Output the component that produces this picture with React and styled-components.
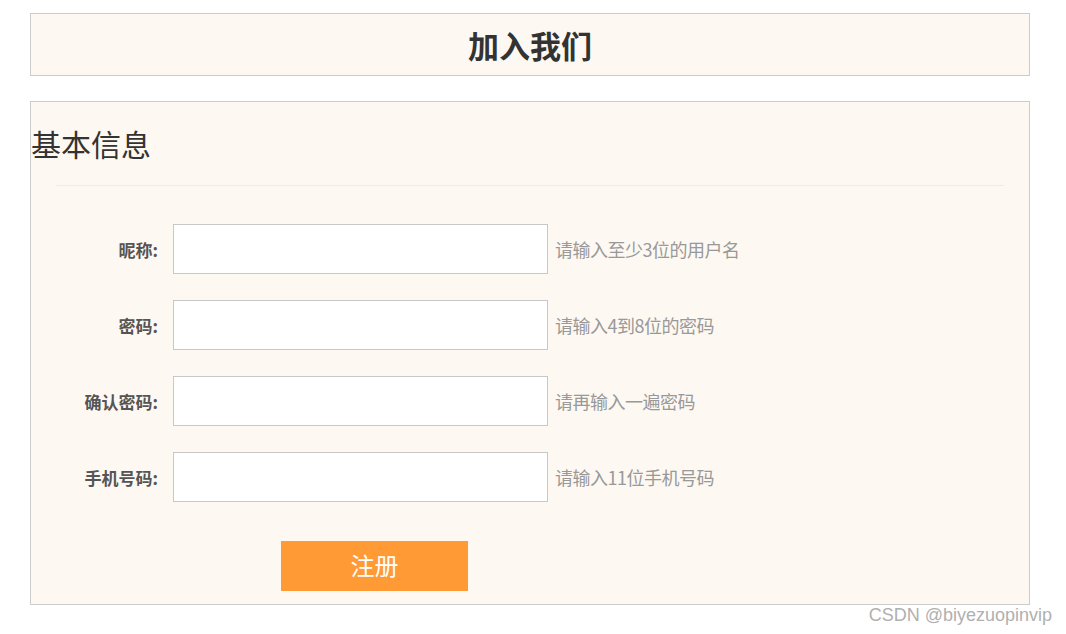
import React from 'react'
import styled, { createGlobalStyle } from "styled-components";

const GlobalStyle = createGlobalStyle`
    body {
        margin: 0;
        background: #fff;
        font-family: "Noto Sans CJK SC", "Noto Sans", sans-serif;
    }
`

const fields = [
    { label: '昵称:', hint: '请输入至少3位的用户名', type: 'text' },
    { label: '密码:', hint: '请输入4到8位的密码', type: 'password' },
    { label: '确认密码:', hint: '请再输入一遍密码', type: 'password' },
    { label: '手机号码:', hint: '请输入11位手机号码', type: 'text' },
]

const App = () => {
    return (
        <Page>
            <GlobalStyle />
            <TitleBox>
                <Title>加入我们</Title>
            </TitleBox>
            <FormBox>
                <Heading>基本信息</Heading>
                <Divider />
                <Fields>
                    {fields.map((f) => (
                        <Row key={f.label}>
                            <Label>{f.label}</Label>
                            <Input type={f.type} />
                            <Hint>{f.hint}</Hint>
                        </Row>
                    ))}
                </Fields>
                <Submit>注册</Submit>
            </FormBox>
            <Watermark>CSDN @biyezuopinvip</Watermark>
        </Page>
    )
}

export default App;

const Page = styled.div`
    position: relative;
    box-sizing: border-box;
    width: 1066px;
    height: 634px;
    padding: 13px 36px 0 30px;
`

const TitleBox = styled.div`
    height: 61px;
    border: 1px solid #cccccc;
    background: #fdf8f2;
    display: flex;
    justify-content: center;
    align-items: center;
`

const Title = styled.h1`
    margin: 0;
    font-size: 31px;
    line-height: 31px;
    font-weight: bold;
    color: #333;
`

const FormBox = styled.div`
    margin-top: 25px;
    border: 1px solid #cccccc;
    background: #fdf8f2;
    padding: 26px 0 13px 0;
`

const Heading = styled.h2`
    margin: 0;
    font-size: 30px;
    line-height: 30px;
    font-weight: normal;
    color: #333;
`

const Divider = styled.div`
    margin: 27px 25px 0 25px;
    height: 1px;
    background: #f3ece4;
`

const Fields = styled.div`
    display: flex;
    flex-direction: column;
    gap: 26px;
    margin-top: 38px;
`

const Row = styled.div`
    display: flex;
    align-items: center;
`

const Label = styled.label`
    width: 127px;
    text-align: right;
    font-size: 17px;
    font-weight: bold;
    color: #555;
`

const Input = styled.input`
    box-sizing: border-box;
    width: 375px;
    height: 50px;
    margin-left: 15px;
    border: 1px solid #c8c8c8;
    background: #fff;
    outline: none;
    font-size: 16px;
`

const Hint = styled.span`
    margin-left: 7px;
    font-size: 18px;
    color: #999;
    letter-spacing: -0.5px;
`

const Submit = styled.button`
    display: block;
    margin: 39px 0 0 250px;
    padding: 0 0 3px 0;
    width: 187px;
    height: 50px;
    border: none;
    background: #ff9a35;
    color: #fff;
    font-family: "Noto Sans CJK SC", sans-serif;
    font-size: 24px;
    cursor: pointer;
`

const Watermark = styled.div`
    position: absolute;
    right: 14px;
    top: 605px;
    font-family: "Liberation Sans", Arial, sans-serif;
    font-size: 18px;
    color: #b0b0b0;
`
